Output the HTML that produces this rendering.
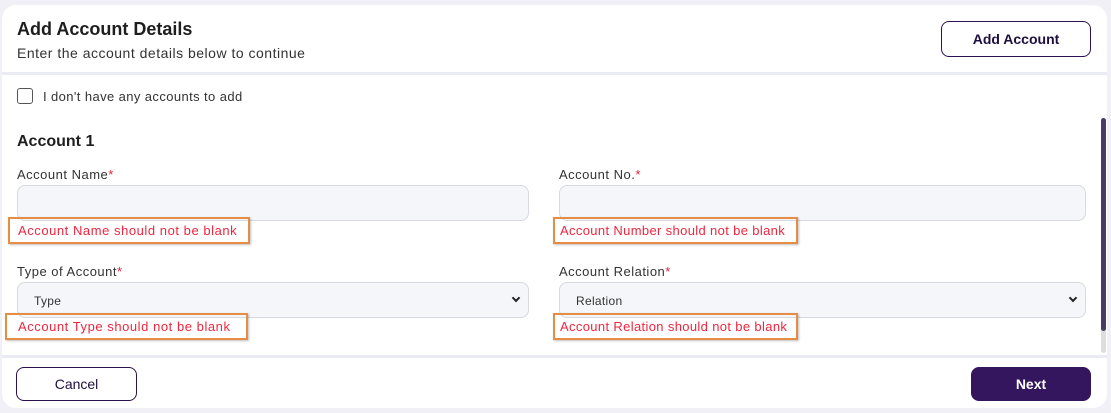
<!DOCTYPE html>
<html><head><style>
*{box-sizing:border-box;margin:0;padding:0}
body{width:1111px;height:413px;background:#f0f0f6;font-family:"Liberation Sans",sans-serif;position:relative;overflow:hidden;color:#222}
.card{position:absolute;left:2px;top:5px;width:1105px;height:403px;background:#fff;border-radius:14px}
.a{position:absolute}
.lbl{font-size:13px;color:#333;letter-spacing:0.5px}
.lbl span{color:#e0203a}
.inp{position:absolute;height:36px;background:#f5f6fa;border:1px solid #d6d8e2;border-radius:8px}
.err{position:absolute;height:27px;border:2px solid #e58c45;box-shadow:1px 1px 2px rgba(0,0,0,.25);color:#f0263f;font-size:13px;padding:4px 0 0 8px;letter-spacing:0.55px}
.sel{font-size:12px;color:#333;padding:11px 0 0 16px;letter-spacing:0.3px}
.chev{position:absolute;right:9px;top:12px;width:6px;height:6px;border-right:2px solid #222;border-bottom:2px solid #222;transform:rotate(45deg)}
.btn{position:absolute;border-radius:8px;font-size:14px;font-weight:bold;text-align:center}
</style></head><body>
<div class="card"></div>
<div class="a" style="left:17px;top:19px;font-size:18px;font-weight:bold;color:#1e1e1e">Add Account Details</div>
<div class="a" style="left:17px;top:45px;font-size:14px;color:#333;letter-spacing:0.5px">Enter the account details below to continue</div>
<div class="btn" style="left:941px;top:21px;width:150px;height:36px;border:1px solid #2d1050;color:#1f0f40;line-height:34px">Add Account</div>
<div class="a" style="left:2px;top:72px;width:1105px;height:3px;background:#ebebf5"></div>
<div class="a" style="left:17px;top:88px;width:16px;height:16px;border:1.5px solid #555;border-radius:3px"></div>
<div class="a" style="left:43px;top:89px;font-size:13px;color:#333;letter-spacing:0.4px">I don't have any accounts to add</div>
<div class="a" style="left:17px;top:133px;font-size:16px;font-weight:bold;color:#1e1e1e">Account 1</div>
<div class="a lbl" style="left:17px;top:167px">Account Name<span>*</span></div>
<div class="a lbl" style="left:559px;top:167px">Account No.<span>*</span></div>
<div class="inp" style="left:17px;top:185px;width:512px"></div>
<div class="inp" style="left:559px;top:185px;width:527px"></div>
<div class="err" style="left:8px;top:217px;width:242px">Account Name should not be blank</div>
<div class="err" style="left:553px;top:217px;width:245px;padding-left:5px;letter-spacing:0.35px">Account Number should not be blank</div>
<div class="a lbl" style="left:17px;top:264px">Type of Account<span>*</span></div>
<div class="a lbl" style="left:559px;top:264px">Account Relation<span>*</span></div>
<div class="inp sel" style="left:17px;top:282px;width:512px">Type<div class="chev"></div></div>
<div class="inp sel" style="left:559px;top:282px;width:527px">Relation<div class="chev"></div></div>
<div class="err" style="left:5px;top:313px;width:243px;padding-left:11px">Account Type should not be blank</div>
<div class="err" style="left:553px;top:313px;width:245px;padding-left:5px;letter-spacing:0.35px">Account Relation should not be blank</div>
<div class="a" style="left:1101px;top:118px;width:5px;height:235px;background:#ddd;border-radius:3px"></div>
<div class="a" style="left:1101px;top:118px;width:5px;height:213px;background:#4a3a66;border-radius:3px"></div>
<div class="a" style="left:2px;top:355px;width:1105px;height:3px;background:#ebebf5"></div>
<div class="btn" style="left:16px;top:367px;width:121px;height:34px;border:1px solid #2d1050;color:#1f0f40;line-height:32px;font-weight:normal">Cancel</div>
<div class="btn" style="left:971px;top:367px;width:120px;height:34px;background:#33165e;color:#fff;line-height:34px">Next</div>
</body></html>
